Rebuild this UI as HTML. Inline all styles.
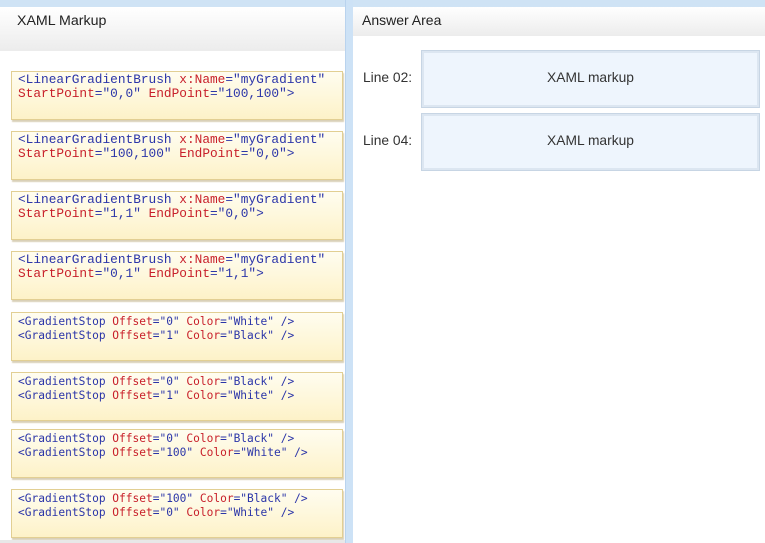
<!DOCTYPE html>
<html><head><meta charset="utf-8"><style>
*{margin:0;padding:0;box-sizing:border-box}
body{width:765px;height:543px;background:#fff;position:relative;overflow:hidden;font-family:"Liberation Sans","DejaVu Sans",sans-serif}
.top{position:absolute;left:0;top:0;width:765px;height:7px;background:#cfe3f5}
.lhead{position:absolute;left:0;top:7px;width:345px;height:44px;background:linear-gradient(#fff,#ececec);font-size:14.2px;color:#222;padding:6px 0 0 17px}
.sep{position:absolute;left:345px;top:0;width:8px;height:543px;background:#cde2f6;border-left:1px solid #b9d3ee}
.rhead{position:absolute;left:353px;top:7px;width:412px;height:29px;background:linear-gradient(#fff,#ececec);font-size:14px;color:#222;padding:5px 0 0 9px}
.box{position:absolute;left:11px;width:332px;height:49px;background:linear-gradient(#fffdf0,#fdf2c8);border:1px solid #e2cf93;box-shadow:1px 2px 1px #d9d0b8;padding:1px 0 0 6px;line-height:14px;white-space:pre}
.c{font-family:"Liberation Mono",monospace;font-size:12.8px}
.s{font-family:"DejaVu Sans Mono",monospace;font-size:11.2px;padding-top:2px}
.b{color:#2b35a8}.r{color:#c8202a}
.lbl{position:absolute;left:363px;font-size:13.8px;color:#333}
.ans{position:absolute;left:422px;width:337px;height:56px;background:#eef5fd;border:2px solid #dce6f1;outline:1px solid #c7d5e4;font-size:13.8px;color:#333;text-align:center;line-height:50px}
.bot{position:absolute;left:0;top:540px;width:345px;height:3px;background:#e8e8e8}
</style></head><body>
<div class="top"></div>
<div class="lhead">XAML Markup</div>
<div class="sep"></div>
<div class="rhead">Answer Area</div>
<div class="box c" style="top:71px"><span class="b">&lt;LinearGradientBrush </span><span class="r">x:Name</span><span class="b">="myGradient"</span>
<span class="r">StartPoint</span><span class="b">="0,0" </span><span class="r">EndPoint</span><span class="b">="100,100"&gt;</span></div>
<div class="box c" style="top:131px"><span class="b">&lt;LinearGradientBrush </span><span class="r">x:Name</span><span class="b">="myGradient"</span>
<span class="r">StartPoint</span><span class="b">="100,100" </span><span class="r">EndPoint</span><span class="b">="0,0"&gt;</span></div>
<div class="box c" style="top:191px"><span class="b">&lt;LinearGradientBrush </span><span class="r">x:Name</span><span class="b">="myGradient"</span>
<span class="r">StartPoint</span><span class="b">="1,1" </span><span class="r">EndPoint</span><span class="b">="0,0"&gt;</span></div>
<div class="box c" style="top:251px"><span class="b">&lt;LinearGradientBrush </span><span class="r">x:Name</span><span class="b">="myGradient"</span>
<span class="r">StartPoint</span><span class="b">="0,1" </span><span class="r">EndPoint</span><span class="b">="1,1"&gt;</span></div>
<div class="box s" style="top:312px"><span class="b">&lt;GradientStop </span><span class="r">Offset</span><span class="b">="0" </span><span class="r">Color</span><span class="b">="White" /&gt;</span>
<span class="b">&lt;GradientStop </span><span class="r">Offset</span><span class="b">="1" </span><span class="r">Color</span><span class="b">="Black" /&gt;</span></div>
<div class="box s" style="top:372px"><span class="b">&lt;GradientStop </span><span class="r">Offset</span><span class="b">="0" </span><span class="r">Color</span><span class="b">="Black" /&gt;</span>
<span class="b">&lt;GradientStop </span><span class="r">Offset</span><span class="b">="1" </span><span class="r">Color</span><span class="b">="White" /&gt;</span></div>
<div class="box s" style="top:429px"><span class="b">&lt;GradientStop </span><span class="r">Offset</span><span class="b">="0" </span><span class="r">Color</span><span class="b">="Black" /&gt;</span>
<span class="b">&lt;GradientStop </span><span class="r">Offset</span><span class="b">="100" </span><span class="r">Color</span><span class="b">="White" /&gt;</span></div>
<div class="box s" style="top:489px"><span class="b">&lt;GradientStop </span><span class="r">Offset</span><span class="b">="100" </span><span class="r">Color</span><span class="b">="Black" /&gt;</span>
<span class="b">&lt;GradientStop </span><span class="r">Offset</span><span class="b">="0" </span><span class="r">Color</span><span class="b">="White" /&gt;</span></div>
<div class="bot"></div>
<div class="lbl" style="top:70px">Line 02:</div>
<div class="ans" style="top:51px">XAML markup</div>
<div class="lbl" style="top:133px">Line 04:</div>
<div class="ans" style="top:114px">XAML markup</div>
</body></html>
